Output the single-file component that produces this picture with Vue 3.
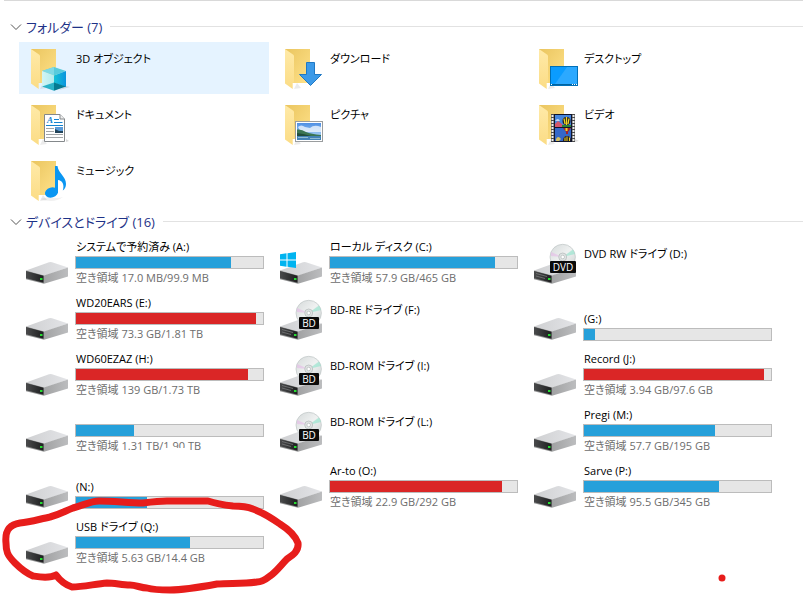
<template>
  <main class="explorer">
    <!-- Folders -->
    <section>
      <header class="group-header">
        <button class="group-toggle" @click="foldersOpen = !foldersOpen">
          <svg class="chevron" viewBox="0 0 12 8" fill="none" stroke="currentColor">
            <path d="M1 1.500L6 6.500L11 1.500"></path>
          </svg>
          フォルダー ({{ folders.length }})
        </button>
        <span class="group-line"></span>
      </header>
      <ul v-if="foldersOpen" class="tile-grid">
        <li v-for="folder in folders" :key="folder.name">
          <a
            href="#"
            class="tile"
            :class="{ selected: selected === folder.name }"
            @click.prevent="selected = folder.name"
          >
            <svg class="icon" viewBox="0 0 48 48">
              <path d="M17 45L24 44L20 39z" fill="#000" opacity="0.08"></path>
              <path d="M8 5H33V39H8z" fill="url(#folderBack)"></path>
              <path d="M8 5L16 10.500Q17 11 17 12V38L15.700 39V45L8 39.500z" fill="url(#folderFlap)"></path>

              <g v-if="folder.kind === 'objects'">
                <path d="M43 42L47 43L36 46z" fill="#000" opacity="0.12"></path>
                <path d="M31 23L43 27L31 31.500L19 27z" fill="#58cbdc"></path>
                <path d="M31 23V31.500L19 27z" fill="#80d9e4"></path>
                <path d="M19 27L31 31.500V39L19 43z" fill="url(#cubeLeft)"></path>
                <path d="M43 27L31 31.500V39L43 43z" fill="url(#cubeRight)"></path>
                <path d="M19 42.500L31 38.500V46.800z" fill="#2bb3c8"></path>
                <path d="M43 42.500L31 38.500V46.800z" fill="#067a91"></path>
              </g>

              <path
                v-else-if="folder.kind === 'downloads'"
                d="M29.500 18.500H37.500V30.500H44.500L33.500 41.500L22.500 30.500H29.500z"
                fill="#3c9ae8"
                stroke="#2079c4"
              ></path>

              <g v-else-if="folder.kind === 'desktop'">
                <rect x="19.500" y="22.500" width="27" height="19" fill="#0a9cff" stroke="#0070b8"></rect>
                <path d="M24 40L36 23H46V40z" fill="#35adff" opacity="0.8"></path>
                <path d="M20 40.500H46" stroke="#00639f"></path>
                <path d="M20 40.500H21M41 40.500H42M43 40.500H44M45 40.500H46" stroke="#fff"></path>
              </g>

              <g v-else-if="folder.kind === 'documents'">
                <path d="M43 39L46 41L43 42z" fill="#000" opacity="0.15"></path>
                <path d="M21.500 14.500H37L41.500 19V41.500H21.500z" fill="#fff" stroke="#84888b"></path>
                <path d="M37 14.500V19H41.500" fill="#eee" stroke="#84888b"></path>
                <text x="24" y="23" class="doc-letter">A</text>
                <path d="M31 19.500H36M31 22.500H39.500M23 25.500H40" stroke="#1583cf"></path>
                <path d="M23 28.500H31M23 31.500H31M23 34.500H40M23 37.500H40" stroke="#a2a5a7"></path>
                <rect x="32" y="27" width="8" height="6" fill="#5b9bd8"></rect>
                <path d="M32 29L36 31L40 31V33H32z" fill="#22445a"></path>
              </g>

              <g v-else-if="folder.kind === 'pictures'">
                <rect x="18.500" y="21.500" width="27" height="20" fill="#fff" stroke="#9a9d9f"></rect>
                <rect x="20" y="23" width="24" height="17" fill="url(#sky)"></rect>
                <path d="M21 27Q24 24 28 27L33 28Q37 24 44 27V32H24z" fill="#fff" opacity="0.7"></path>
                <path d="M20 29.500Q25 29 29 32Q34 34 44 35V37H20z" fill="#3b7553"></path>
                <path d="M20 33Q28 34 34 36H20z" fill="#214c3c"></path>
                <rect x="20" y="36" width="24" height="4" fill="#4382b5"></rect>
                <path d="M21 37.500H31M33 38.500H43" stroke="#8ebbd5"></path>
              </g>

              <g v-else-if="folder.kind === 'videos'">
                <path d="M44 39L48 41L44 42z" fill="#000" opacity="0.12"></path>
                <rect x="20" y="14" width="24" height="28" fill="#4b4b4b"></rect>
                <path d="M21.500 15V42M42.500 15V42" stroke="#eee" stroke-width="2" stroke-dasharray="2 1"></path>
                <rect x="23" y="14" width="18" height="28" fill="#10152c"></rect>
                <rect x="24" y="15" width="16" height="12" fill="#4686dc"></rect>
                <rect x="24" y="28" width="16" height="13" fill="#3568c8"></rect>
                <path d="M24 24L27 21L32 25V27H24z" fill="#d4576b"></path>
                <path d="M24 21Q27 17 29 21z" fill="#bfd6f3"></path>
                <path d="M31 25H40V27H31z" fill="#2d8336"></path>
                <ellipse cx="35.500" cy="21" rx="4" ry="4" fill="#231b1b"></ellipse>
                <path d="M33 18.500L34 24M35.500 17V25M38 18.500L37 24" stroke="#f1d725" stroke-width="1.300"></path>
                <path d="M32 28H40L37 32V34H35V32z" fill="#a3232b"></path>
                <path d="M35.500 28V31" stroke="#f1d725" stroke-width="2"></path>
                <path d="M32 41Q32 36 36 36Q40 36 40 41z" fill="#292020"></path>
                <path d="M34 37.500V41M36 36.500V41M38.500 37.500V41" stroke="#f1d725"></path>
                <path d="M25 39Q27 35 30 39L28 41H25z" fill="#d2be62"></path>
              </g>

              <g v-else fill="#0a96f2">
                <path d="M17 43Q31 48 40 41Q34 43 26 41z" fill="#000" opacity="0.06"></path>
                <ellipse cx="28.500" cy="36.500" rx="6.700" ry="5" transform="rotate(-16 28.500 36.500)"></ellipse>
                <path d="M32 10H34.500C35.500 18 43 20 43 28C43 31 41.500 33.500 39.800 34.500C41.800 28 39 24.500 35 24V36.500H32z"></path>
              </g>
            </svg>
            <span class="tile-body single">
              <span class="name">{{ folder.name }}</span>
            </span>
          </a>
        </li>
      </ul>
    </section>

    <!-- Devices and drives -->
    <section>
      <header class="group-header">
        <button class="group-toggle" @click="drivesOpen = !drivesOpen">
          <svg class="chevron" viewBox="0 0 12 8" fill="none" stroke="currentColor">
            <path d="M1 1.500L6 6.500L11 1.500"></path>
          </svg>
          デバイスとドライブ ({{ drives.length }})
        </button>
        <span class="group-line"></span>
      </header>
      <ul v-if="drivesOpen" class="tile-grid">
        <li v-for="drive in drives" :key="drive.id">
          <a
            href="#"
            class="tile"
            :class="{ selected: selected === drive.id }"
            @click.prevent="selected = drive.id"
          >
            <svg class="icon" viewBox="0 0 48 48">
              <path d="M3 31.500L26 23.300Q27.500 23 29 23.200L45 28.500L21 37z" fill="url(#driveTop)"></path>
              <path d="M21 36.500L45 28.500V37.500L21 44.800z" fill="url(#driveSide)"></path>
              <path d="M3 31.500L21 36.500V44.800L3 40.300z" fill="#8f9091"></path>
              <path d="M3 32L20.500 36.800V43.800L3 39.300z" fill="url(#driveFront)"></path>
              <path v-if="drive.disc" d="M5 34.500L16 37.500M5 37L14 39.500" stroke="#77797a" stroke-width="0.8"></path>
              <rect x="17" y="39" width="2.500" height="2" fill="#26dc32"></rect>
              <path
                v-if="drive.system"
                d="M3 15.200L9.500 14.300V20.500H3zM10.500 14.200L19 13V20.500H10.500zM3 21.500H9.500V27.700L3 26.800zM10.500 21.500H19V29L10.500 27.800z"
                fill="#00b4f0"
              ></path>
              <g v-if="drive.disc">
                <circle cx="31.700" cy="18" r="12.700" fill="url(#disc)" stroke="#bfc5c5" stroke-width="0.700"></circle>
                <path d="M31.700 18L42 10.500L44 15z" fill="#8de5cc" opacity="0.6"></path>
                <path d="M31.700 18L20 17V13z" fill="#e6b6e8" opacity="0.55"></path>
                <circle cx="31.700" cy="18" r="4" fill="#dfe3e3" stroke="#b3b9b9" stroke-width="0.700"></circle>
                <circle cx="31.700" cy="18" r="1.800" fill="#fff" stroke="#b3b9b9" stroke-width="0.700"></circle>
                <rect
                  :x="drive.disc === 'DVD' ? 19 : 22"
                  y="22"
                  :width="drive.disc === 'DVD' ? 26 : 20"
                  height="12"
                  rx="1"
                  fill="#0b0b0b"
                ></rect>
                <text x="32" y="32" class="disc-label">{{ drive.disc }}</text>
              </g>
            </svg>
            <span class="tile-body" :class="drive.layout">
              <span class="name">{{ drive.name }}</span>
              <span
                v-if="drive.used !== undefined"
                class="bar"
                role="meter"
                aria-valuemin="0"
                aria-valuemax="100"
                :aria-valuenow="drive.used"
              >
                <span class="bar-fill" :class="{ full: drive.used > 90 }" :style="{ width: drive.used + '%' }"></span>
              </span>
              <span v-if="drive.free" class="free">
                空き領域 {{ drive.free }}
                <span v-if="drive.smudged" class="smudge"></span>
              </span>
            </span>
          </a>
        </li>
      </ul>
    </section>

    <!-- Pen marks drawn over the window -->
    <svg class="ink" viewBox="0 0 803 606" width="803" height="606">
      <path
        d="M56 575C49 579 39 577 33 576C26 573 20 568 15 563C7 555 6 551 6 543C5 533 7 525 20 523C30 522 40 519 50 517C61 514 65 511 73 508C84 505 91 501 99 501C114 501 129 503 143 503C151 502 159 501 167 501H208C217 504 224 505 233 506C242 506 248 507 253 509C264 513 273 519 280 524C288 529 295 535 298 543C299 551 293 555 287 559C281 565 276 572 270 576C265 580 262 582 257 582C243 584 230 583 217 584C201 587 185 590 170 590C160 590 154 590 147 588C141 588 136 585 130 585C122 585 115 583 107 583C95 584 83 587 72 587C66 585 61 582 56 575z"
        fill="none"
        stroke="#e71d1b"
        stroke-width="7"
        stroke-linejoin="round"
      ></path>
      <circle cx="722" cy="578" r="3.500" fill="#e71d1b"></circle>
    </svg>

    <!-- Shared gradients -->
    <svg class="defs" aria-hidden="true">
      <defs>
        <linearGradient id="folderBack" x1="0" y1="0" x2="1" y2="1">
          <stop offset="0" stop-color="#eac55f"></stop>
          <stop offset="1" stop-color="#ffe28a"></stop>
        </linearGradient>
        <linearGradient id="folderFlap" x1="0" y1="0" x2="0" y2="1">
          <stop offset="0" stop-color="#ffeaa8"></stop>
          <stop offset="1" stop-color="#fbdc85"></stop>
        </linearGradient>
        <linearGradient id="cubeLeft">
          <stop offset="0" stop-color="#d2f5f4"></stop>
          <stop offset="1" stop-color="#b2ebee"></stop>
        </linearGradient>
        <linearGradient id="cubeRight">
          <stop offset="0" stop-color="#16c2d6"></stop>
          <stop offset="1" stop-color="#0a94dd"></stop>
        </linearGradient>
        <linearGradient id="sky" x1="0" y1="0" x2="0" y2="1">
          <stop offset="0" stop-color="#4e8fe4"></stop>
          <stop offset="1" stop-color="#bfe0f8"></stop>
        </linearGradient>
        <linearGradient id="driveTop">
          <stop offset="0" stop-color="#cfd0d2"></stop>
          <stop offset="1" stop-color="#e3e4e7"></stop>
        </linearGradient>
        <linearGradient id="driveSide">
          <stop offset="0" stop-color="#a1a2a3"></stop>
          <stop offset="1" stop-color="#bcbdbf"></stop>
        </linearGradient>
        <linearGradient id="driveFront">
          <stop offset="0" stop-color="#4a4b4c"></stop>
          <stop offset="1" stop-color="#1d1e1f"></stop>
        </linearGradient>
        <linearGradient id="disc" x1="0" y1="0" x2="1" y2="1">
          <stop offset="0" stop-color="#d5dada"></stop>
          <stop offset="0.5" stop-color="#eff1f1"></stop>
          <stop offset="1" stop-color="#cbd1d1"></stop>
        </linearGradient>
      </defs>
    </svg>
  </main>
</template>

<script setup>
import { ref } from 'vue';

const foldersOpen = ref(true);
const drivesOpen = ref(true);
const selected = ref('3D オブジェクト');

const folders = [
  { name: '3D オブジェクト', kind: 'objects' },
  { name: 'ダウンロード', kind: 'downloads' },
  { name: 'デスクトップ', kind: 'desktop' },
  { name: 'ドキュメント', kind: 'documents' },
  { name: 'ピクチャ', kind: 'pictures' },
  { name: 'ビデオ', kind: 'videos' },
  { name: 'ミュージック', kind: 'music' }
];

// layout: "single" has a name only, "bar-only" has no free space line
const drives = [
  { id: 'A', name: 'システムで予約済み (A:)', used: 83, free: '17.0 MB/99.9 MB' },
  { id: 'C', name: 'ローカル ディスク (C:)', used: 88, free: '57.9 GB/465 GB', system: true },
  { id: 'D', name: 'DVD RW ドライブ (D:)', disc: 'DVD', layout: 'single' },
  { id: 'E', name: 'WD20EARS (E:)', used: 96, free: '73.3 GB/1.81 TB' },
  { id: 'F', name: 'BD-RE ドライブ (F:)', disc: 'BD', layout: 'single' },
  { id: 'G', name: '(G:)', used: 6, layout: 'bar-only' },
  { id: 'H', name: 'WD60EZAZ (H:)', used: 92, free: '139 GB/1.73 TB' },
  { id: 'I', name: 'BD-ROM ドライブ (I:)', disc: 'BD', layout: 'single' },
  { id: 'J', name: 'Record (J:)', used: 96, free: '3.94 GB/97.6 GB' },
  { id: 'K', name: '', used: 31, free: '1.31 TB/1.90 TB', smudged: true },
  { id: 'L', name: 'BD-ROM ドライブ (L:)', disc: 'BD', layout: 'single' },
  { id: 'M', name: 'Pregi (M:)', used: 70, free: '57.7 GB/195 GB' },
  { id: 'N', name: '(N:)', used: 38, layout: 'bar-only' },
  { id: 'O', name: 'Ar-to (O:)', used: 92, free: '22.9 GB/292 GB' },
  { id: 'P', name: 'Sarve (P:)', used: 72, free: '95.5 GB/345 GB' },
  { id: 'Q', name: 'USB ドライブ (Q:)', used: 61, free: '5.63 GB/14.4 GB' }
];
</script>

<style>
body {
  margin: 0;
  background-color: #ffffff;
}
</style>

<style scoped>
.explorer {
  position: relative;
  min-height: 100vh;
  padding-top: 10px;
  box-sizing: border-box;
  font-family: "Open Sans", "Noto Sans CJK JP", sans-serif;
  font-feature-settings: "palt";
  font-size: 11px;
  line-height: 16px;
  color: #000000;
}
.explorer::before {
  content: "";
  display: block;
  height: 1px;
  margin: -10px 0 10px 4px;
  background-color: #d9d9d9;
}
.group-header {
  display: flex;
  align-items: center;
  gap: 8px;
  height: 31px;
  padding-left: 10px;
}
.group-toggle {
  display: flex;
  align-items: center;
  gap: 4px;
  padding: 0;
  border: none;
  background: none;
  color: #1e3287;
  font: inherit;
  font-feature-settings: inherit;
  font-size: 13px;
  line-height: 20px;
  white-space: nowrap;
}
.chevron {
  width: 12px;
  height: 8px;
  color: #555555;
}
.group-line {
  flex: 1;
  height: 1px;
  background-color: #e2e2e2;
}
.tile-grid {
  display: grid;
  grid-template-columns: repeat(auto-fill, 250px);
  gap: 4px;
  margin: 0;
  padding: 0 0 0 19px;
  list-style: none;
}
.tile {
  display: flex;
  gap: 4px;
  height: 52px;
  padding: 0 5px 0 4px;
  box-sizing: border-box;
  color: inherit;
  text-decoration: none;
}
.tile.selected {
  background-color: #e5f3ff;
}
.icon {
  flex: none;
  width: 48px;
  height: 48px;
  margin-top: 2px;
}
.tile-body {
  display: flex;
  flex-direction: column;
  gap: 1px;
  width: 189px;
  padding-top: 2px;
}
.tile-body.single {
  padding-top: 9px;
}
.tile-body.bar-only {
  padding-top: 18px;
}
.name,
.free {
  height: 16px;
  padding-left: 1px;
  white-space: nowrap;
}
.free {
  position: relative;
  color: #6d6d6d;
}
.smudge {
  position: absolute;
  top: 10px;
  left: 90px;
  width: 22px;
  height: 6px;
  background-color: #ffffff;
}
.bar {
  height: 13px;
  border: 1px solid #bcbcbc;
  box-sizing: border-box;
  background-color: #e6e6e6;
}
.bar-fill {
  display: block;
  height: 100%;
  background-color: #26a0da;
}
.bar-fill.full {
  background-color: #da2626;
}
.doc-letter {
  font-family: "Liberation Serif", serif;
  font-size: 9px;
  font-weight: bold;
  font-style: italic;
  fill: #1583cf;
}
.disc-label {
  font-size: 10px;
  text-anchor: middle;
  fill: #ffffff;
}
.ink {
  position: absolute;
  top: 0;
  left: 0;
  pointer-events: none;
}
.defs {
  position: absolute;
  width: 0;
  height: 0;
}
</style>
